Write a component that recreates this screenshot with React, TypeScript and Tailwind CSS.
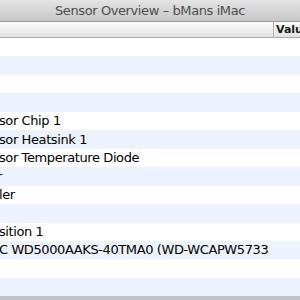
const rows: string[] = [
  "",
  "",
  "",
  "",
  "sor Chip 1",
  "sor Heatsink 1",
  "sor Temperature Diode",
  "r",
  "ler",
  "",
  "sition 1",
  "C WD5000AAKS-40TMA0 (WD-WCAPW5733",
  "",
  "",
];

export default function App() {
  return (
    <div className="w-[300px] h-[300px] overflow-hidden bg-white flex flex-col font-['Lucida_Grande','DejaVu_Sans',sans-serif]">
      {/* title bar */}
      <div className="h-[22px] shrink-0 flex items-center justify-center bg-gradient-to-b from-[#e4e4e4] to-[#c6c6c6] border-b border-[#9c9c9c] text-[13px] text-[#4e4e4e] tracking-[-0.4px]">
        Sensor Overview – bMans iMac
      </div>

      {/* column header */}
      <div className="h-[16px] shrink-0 flex bg-gradient-to-b from-[#fbfbfb] to-[#e2e2e2] border-b border-[#a8a8a8]">
        <div className="w-[274px] shrink-0 border-r border-[#b4b4b4]" />
        <div className="pl-[2px] shrink-0 text-[11px] font-bold text-[#1a1a1a] leading-[16px] whitespace-nowrap">Value</div>
      </div>

      {/* rows */}
      <div className="flex-1 flex flex-col">
        {rows.map((r, i) => (
          <div
            key={i}
            className={
              "h-[18.46px] shrink-0 flex items-center whitespace-nowrap text-[13px] tracking-[-0.4px] text-black " +
              (i % 2 === 1 ? "bg-[#edf3fe]" : "bg-white")
            }
          >
            <span className={r === "r" ? "-ml-[3px]" : "-ml-[1px]"}>{r}</span>
          </div>
        ))}
        <div className="flex-1 bg-[#c2c2c2]" />
      </div>
    </div>
  );
}
